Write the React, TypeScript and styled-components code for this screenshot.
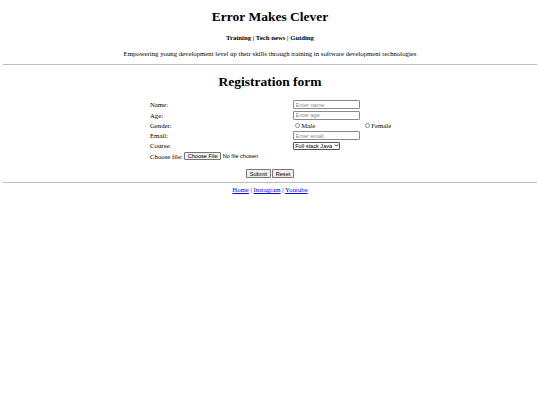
import React from "react";
import styled, { createGlobalStyle } from "styled-components";
import { ChevronDown } from "lucide-react";

const GlobalStyle = createGlobalStyle`
  body {
    margin: 0;
    font-family: "Liberation Serif", "Times New Roman", serif;
    font-size: 6.75px;
    color: #000;
    background: #fff;
  }
`;

const Page = styled.div`
  padding: 0 3.4px;
  display: flex;
  flex-direction: column;
`;

const Header = styled.header`
  text-align: center;
  display: flex;
  flex-direction: column;
`;

const Title = styled.h1`
  font-size: 13.5px;
  line-height: 15.5px;
  font-weight: 700;
  margin: 9px 0 0;
`;

const Nav = styled.h4`
  font-size: 6.75px;
  line-height: 7.8px;
  font-weight: 700;
  margin: 9px 0 0;
`;

const Tagline = styled.p`
  line-height: 7.8px;
  margin: 8.5px 0 0;
`;

const Rule = styled.hr<{ $top: number; $bottom: number }>`
  width: 100%;
  margin: ${(p) => p.$top}px 0 ${(p) => p.$bottom}px;
  border: 0;
  border-top: 1px solid #bdbdbd;
  height: 0;
`;

const FormTitle = styled.h1`
  font-size: 13.5px;
  line-height: 15.5px;
  font-weight: 700;
  text-align: center;
  margin: 0;
`;

const Form = styled.form`
  display: flex;
  flex-direction: column;
  align-items: center;
  margin-top: 10px;
`;

const Grid = styled.div`
  width: 240px;
  display: grid;
  grid-template-columns: 143px 70px 1fr;
  grid-auto-rows: 10.3px;
  align-items: center;
`;

const Label = styled.div<{ $wide?: boolean }>`
  grid-column: ${(p) => (p.$wide ? "1 / -1" : "1")};
  white-space: nowrap;
  display: flex;
  align-items: center;
  gap: 1.6px;
`;

const Field = styled.div`
  display: flex;
  align-items: center;
  white-space: nowrap;
`;

const control = `
  font-family: "Liberation Sans", Arial, sans-serif;
  font-size: 5.6px;
  color: #000;
`;

const TextInput = styled.input`
  ${control}
  width: 67px;
  height: 9px;
  padding: 0 1.5px;
  border: 0.6px solid #8a8a8a;
  border-radius: 1px;
  box-sizing: border-box;
  outline: none;

  &::placeholder {
    color: #8a8a8a;
  }
`;

const Radio = styled.input`
  appearance: none;
  width: 5px;
  height: 5px;
  margin: 0.4px 1.3px 0 2px;
  border: 0.6px solid #8a8a8a;
  border-radius: 50%;
  background: #fff;
  box-sizing: border-box;
`;

const SelectWrap = styled.span`
  position: relative;
  display: inline-flex;
`;

const Select = styled.select`
  ${control}
  appearance: none;
  width: 47px;
  height: 7.5px;
  padding: 0 0 0 1.2px;
  border: 0.6px solid #555;
  border-radius: 1px;
  background: #fff;
  box-sizing: border-box;
  line-height: 6px;
`;

const Caret = styled(ChevronDown)`
  position: absolute;
  right: 1.5px;
  top: 1.3px;
  pointer-events: none;
`;

const FileInput = styled.input`
  ${control}
  width: 80px;

  &::file-selector-button {
    ${control}
    height: 7.5px;
    padding: 0 2.3px;
    margin-right: 1.8px;
    border: 0.6px solid #767676;
    border-radius: 1px;
    background: #efefef;
  }
`;

const Actions = styled.div`
  display: flex;
  justify-content: center;
  gap: 1.4px;
  margin-top: 8px;
`;

const Button = styled.button`
  ${control}
  height: 9px;
  padding: 0 2.6px;
  border: 0.6px solid #767676;
  border-radius: 1px;
  background: #efefef;
  box-sizing: border-box;
`;

const Footer = styled.footer`
  text-align: center;
  line-height: 7.8px;
`;

const FooterLink = styled.a`
  color: #0000ee;
  text-decoration: underline;
`;

const App: React.FC = () => {
  return (
    <>
      <GlobalStyle />
      <Page>
        <Header>
          <Title>Error Makes Clever</Title>
          <Nav>Training | Tech news | Guiding</Nav>
          <Tagline>
            Empowering young development level up their skills through training in software
            development technologies
          </Tagline>
        </Header>
        <Rule $top={6.5} $bottom={9} />

        <FormTitle>Registration form</FormTitle>
        <Form onSubmit={(e) => e.preventDefault()}>
          <Grid>
            <Label>Name:</Label>
            <Field>
              <TextInput type="text" placeholder="Enter name" />
            </Field>
            <span />

            <Label>Age:</Label>
            <Field>
              <TextInput type="text" placeholder="Enter age" />
            </Field>
            <span />

            <Label>Gender:</Label>
            <Field>
              <Radio type="radio" name="gender" />
              Male
            </Field>
            <Field>
              <Radio type="radio" name="gender" />
              Female
            </Field>

            <Label>Email:</Label>
            <Field>
              <TextInput type="email" placeholder="Enter email" />
            </Field>
            <span />

            <Label>Course:</Label>
            <Field>
              <SelectWrap>
                <Select defaultValue="java">
                  <option value="java">Full stack Java</option>
                  <option value="python">Full stack Python</option>
                  <option value="mern">MERN stack</option>
                </Select>
                <Caret size={5} strokeWidth={4} />
              </SelectWrap>
            </Field>
            <span />

            <Label $wide>
              Choose file: <FileInput type="file" />
            </Label>
          </Grid>
          <Actions>
            <Button type="submit">Submit</Button>
            <Button type="reset">Reset</Button>
          </Actions>
        </Form>
        <Rule $top={4} $bottom={3} />

        <Footer>
          <FooterLink href="#">Home</FooterLink> | <FooterLink href="#">Instagram</FooterLink> |{" "}
          <FooterLink href="#">Youtube</FooterLink>
        </Footer>
      </Page>
    </>
  );
};

export default App;
